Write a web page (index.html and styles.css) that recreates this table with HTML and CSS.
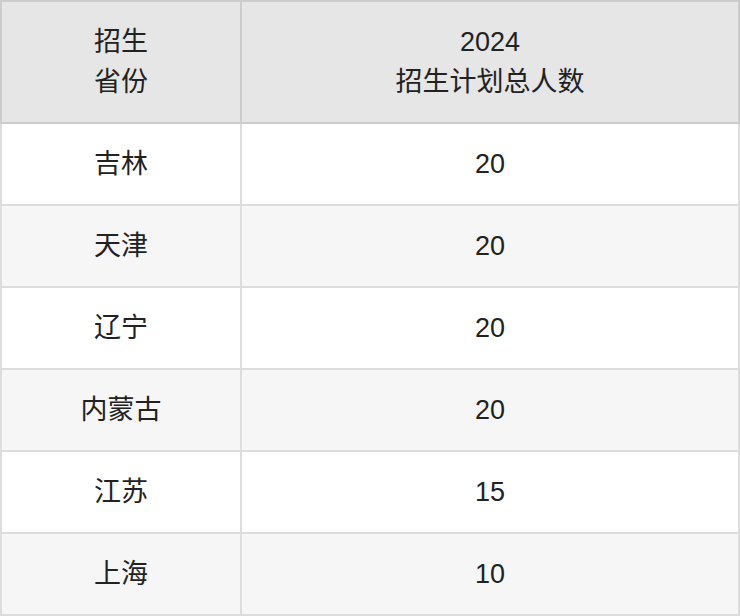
FILE: index.html
```html
<!DOCTYPE html>
<html lang="zh-CN">
<head>
<meta charset="utf-8">
<title>招生计划</title>
<link rel="stylesheet" href="styles.css">
</head>
<body>
<div class="table">
  <div class="cell head first">招生<br>省份</div>
  <div class="cell head">2024<br>招生计划总人数</div>

  <div class="cell first">吉林</div>
  <div class="cell">20</div>

  <div class="cell first alt">天津</div>
  <div class="cell alt">20</div>

  <div class="cell first">辽宁</div>
  <div class="cell">20</div>

  <div class="cell first alt">内蒙古</div>
  <div class="cell alt">20</div>

  <div class="cell first">江苏</div>
  <div class="cell">15</div>

  <div class="cell first alt">上海</div>
  <div class="cell alt">10</div>
</div>
</body>
</html>
```

FILE: styles.css
```css
html, body {
  margin: 0;
  padding: 0;
  background: #ffffff;
}

.table {
  display: grid;
  grid-template-columns: 242px 498px;
  width: 740px;
  font-family: "Liberation Sans", "Noto Sans CJK SC", sans-serif;
  font-size: 27px;
  line-height: 40px;
  color: #222222;
}

.cell {
  box-sizing: border-box;
  height: 82px;
  display: flex;
  align-items: center;
  justify-content: center;
  text-align: center;
  background: #ffffff;
  border-right: 2px solid #dddddd;
  border-bottom: 2px solid #dddddd;
}

.cell.first {
  border-left: 2px solid #dddddd;
}

.cell.alt {
  background: #f6f6f6;
}

.cell.head {
  height: 124px;
  background: #e6e6e6;
  border-top: 2px solid #cccccc;
  border-right-color: #cccccc;
  border-bottom-color: #cccccc;
}

.cell.head.first {
  border-left-color: #cccccc;
}
```
